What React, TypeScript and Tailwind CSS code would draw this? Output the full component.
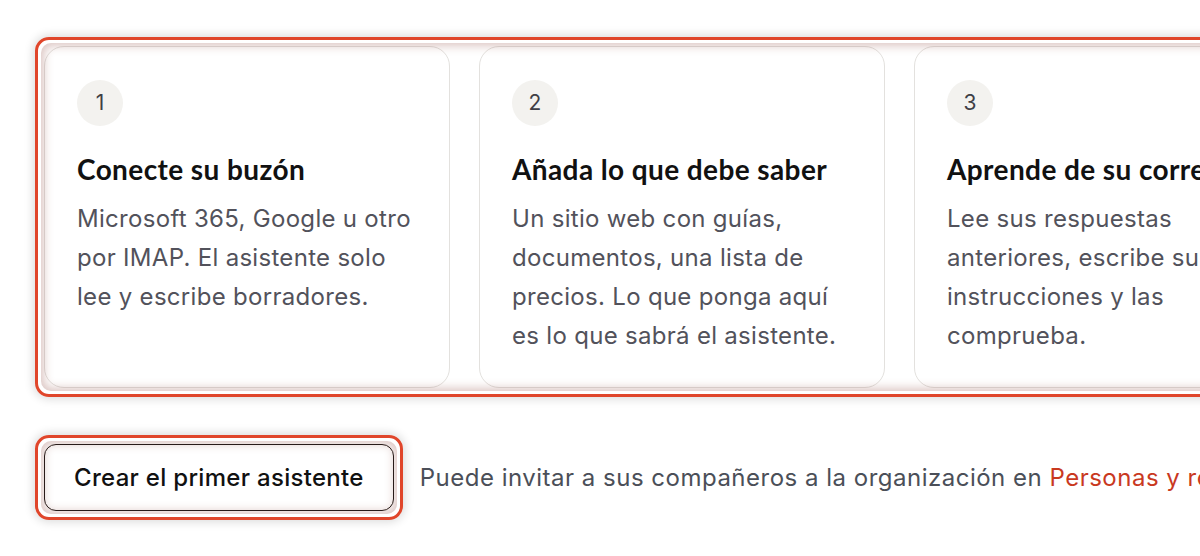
const steps = [
  {
    n: "1",
    title: "Conecte su buzón",
    body: "Microsoft 365, Google u otro por IMAP. El asistente solo lee y escribe borradores.",
  },
  {
    n: "2",
    title: "Añada lo que debe saber",
    body: "Un sitio web con guías, documentos, una lista de precios. Lo que ponga aquí es lo que sabrá el asistente.",
  },
  {
    n: "3",
    title: "Aprende de su correo",
    body: "Lee sus respuestas anteriores, escribe sus instrucciones y las comprueba.",
  },
];

function Highlight({ children }: { children: React.ReactNode }) {
  return (
    <div className="relative shrink-0 rounded-[14px] border-[3px] border-[#e0462b] p-[6px] shadow-[0_0_10px_2px_rgba(0,0,0,0.14)]">
      {children}
      <div className="pointer-events-none absolute inset-[3px] rounded-[10px] shadow-[inset_0_0_10px_3px_rgba(130,50,40,0.28)]" />
    </div>
  );
}

export default function App() {
  return (
    <div
      className="h-[556px] w-[1200px] overflow-hidden bg-white"
      style={{ fontFamily: "Inter, 'Liberation Sans', sans-serif" }}
    >
      <div className="ml-[35px] mt-[37px] w-max">
        <Highlight>
          <div className="flex gap-[29px]">
            {steps.map((s) => (
              <div
                key={s.n}
                className="h-[342px] w-[406px] rounded-[20px] border border-[#e3e1de] bg-white px-[32px] pt-[33px]"
              >
                <div className="flex h-[46px] w-[46px] items-center justify-center rounded-full bg-[#f3f2ef] text-[21px] text-[#3f3f46]">
                  {s.n}
                </div>
                <h3
                  className="mt-[25px] text-[28px] font-bold leading-[36px] tracking-[0.4px] text-[#111111]"
                  style={{ fontFamily: "Lato, 'Noto Sans', sans-serif" }}
                >
                  {s.title}
                </h3>
                <p className="mt-[12px] w-[342px] text-[24px] leading-[39px] tracking-[0.3px] text-[#52525b]">
                  {s.body}
                </p>
              </div>
            ))}
          </div>
        </Highlight>
      </div>

      <div className="ml-[35px] mt-[38px] flex items-center gap-[17px]">
        <Highlight>
          <button className="h-[67px] whitespace-nowrap rounded-[12px] border border-[#1c1917] bg-white px-[29px] text-[24px] font-medium tracking-[0.3px] text-[#111111]">
            Crear el primer asistente
          </button>
        </Highlight>
        <p className="whitespace-nowrap text-[24px] tracking-[0.5px] text-[#4b4f58]">
          Puede invitar a sus compañeros a la organización en{" "}
          <a className="text-[#c9391f]">Personas y roles</a>.
        </p>
      </div>
    </div>
  );
}
